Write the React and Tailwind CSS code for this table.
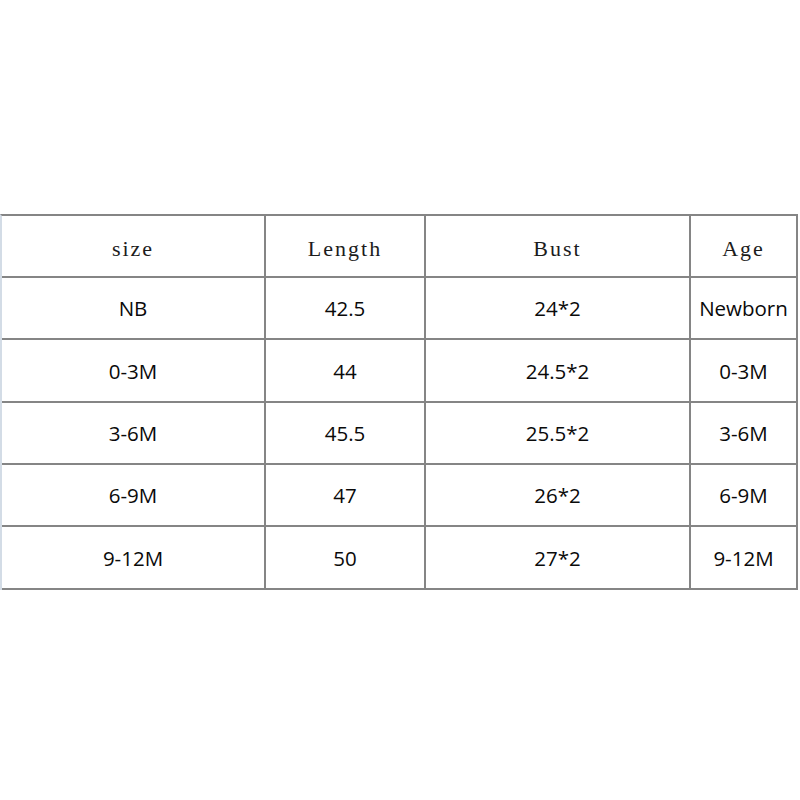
import React from "react";

const rows = [
  ["NB", "42.5", "24*2", "Newborn"],
  ["0-3M", "44", "24.5*2", "0-3M"],
  ["3-6M", "45.5", "25.5*2", "3-6M"],
  ["6-9M", "47", "26*2", "6-9M"],
  ["9-12M", "50", "27*2", "9-12M"],
];

const heights = ["h-[62px]", "h-[62px]", "h-[63px]", "h-[62px]", "h-[62px]", "h-[63px]"];

export default function App() {
  const header = ["size", "Length", "Bust", "Age"];
  return (
    <div className="w-[800px] h-[800px] bg-white pt-[214px]">
      <div className="w-[798px] border-t-2 border-t-[#858585] border-l-2 border-l-[#d3dce6]">
        <div className={`grid grid-cols-[264px_160px_265px_107px] ${heights[0]}`}>
          {header.map((h, i) => (
            <div
              key={i}
              className="flex items-center justify-center border-b-2 border-r-2 border-[#858585] text-[22px] tracking-[2px] text-[#1c1c1c] pt-[4px]"
              style={{ fontFamily: '"Liberation Serif", serif' }}
            >
              {h}
            </div>
          ))}
        </div>
        {rows.map((r, ri) => (
          <div key={ri} className={`grid grid-cols-[264px_160px_265px_107px] ${heights[ri + 1]}`}>
            {r.map((c, ci) => (
              <div
                key={ci}
                className="flex items-center justify-center border-b-2 border-r-2 border-[#858585] text-[20.5px] text-[#0a0a0a] pt-[1px]"
                style={{ fontFamily: '"Open Sans", sans-serif' }}
              >
                {c}
              </div>
            ))}
          </div>
        ))}
      </div>
    </div>
  );
}
